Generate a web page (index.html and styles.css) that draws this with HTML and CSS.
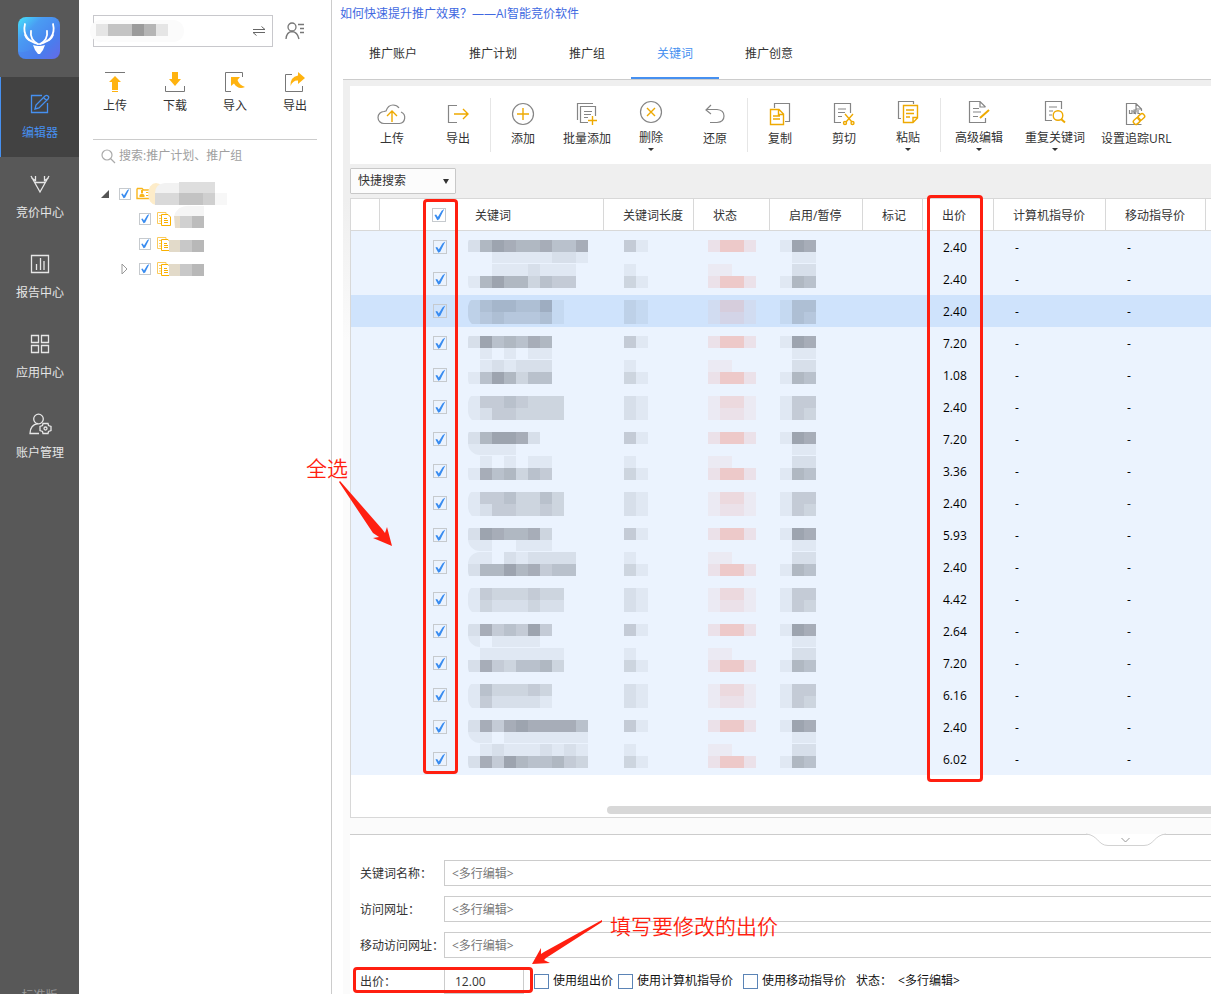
FILE: index.html
```html
<!DOCTYPE html>
<html lang="zh-CN">
<head>
<meta charset="utf-8">
<title>关键词编辑器</title>
<link rel="stylesheet" href="styles.css">
</head>
<body>
<div class="app">
  <nav class="sidebar">
    <svg class="logo" viewBox="0 0 42 42" role="img" aria-label="Logo">
      <defs>
        <linearGradient id="lg" x1="0" y1="0" x2="1" y2="1"><stop offset="0" stop-color="#45e4fb"/><stop offset=".3" stop-color="#4a9cf3"/><stop offset=".7" stop-color="#4a80ee"/><stop offset="1" stop-color="#7462e2"/></linearGradient>
      </defs>
      <rect width="42" height="42" rx="8" fill="url(#lg)"/>
      <path d="M0 35C17 37 27 20 42 8V34Q42 42 34 42H8Q0 42 0 35Z" fill="#4a78ee" opacity=".35"/>
      <g fill="none" stroke="#fff" stroke-width="1.8" stroke-linecap="round">
        <path d="M7 7C4 19 12 25 20 27M35 7C38 19 30 25 22 27"/>
        <path d="M13 14C12 20 15 25 20 27M29 14C30 20 27 25 22 27"/>
        <path d="M7 18Q9 23 13 24M35 18Q33 23 29 24"/>
      </g>
      <path d="M15 28Q21 30 27 28L25 33 22 37H20L17 33Z" fill="#fff"/>
    </svg>
    <a class="nav active" href="#"><svg viewBox="0 0 20 20"><path d="M12 1.500H1.500V18.500H17.500V9"/><path d="M5 15L6 11 15 2Q16.500 .8 18 2T18 5L9 14ZM13.500 3.500L16.500 6.500"/></svg><span>编辑器</span></a>
    <a class="nav" href="#"><svg viewBox="0 0 20 20"><path d="M1 2L10 18 19 2M4.500 8.500H15.500M1.500 4L5.500 6.500V2M18.500 4L14.500 6.500V2"/></svg><span>竞价中心</span></a>
    <a class="nav" href="#"><svg viewBox="0 0 20 20"><path d="M1.500 1.500H18.500V18.500H1.500ZM6.500 10V16M10.500 4V16M14 7V16"/></svg><span>报告中心</span></a>
    <a class="nav" href="#"><svg viewBox="0 0 20 20"><path d="M1.500 1.500H8.500V8.500H1.500ZM11.500 1.500H18.500V8.500H11.500ZM1.500 11.500H8.500V18.500H1.500ZM11.500 11.500H18.500V18.500H11.500Z"/></svg><span>应用中心</span></a>
    <a class="nav" href="#"><svg viewBox="0 0 20 20"><circle cx="8.500" cy="5" r="4.800"/><path d="M9 19.500H0Q0 11 8 9.500"/><circle cx="15.500" cy="14.500" r="1.500"/><path d="M13 9.500H18L18.500 11.500 21 12.500V16.500L18.500 17.500 18 19.500H13L12.500 17.500 10 16.500V12.500L12.500 11.500Z"/></svg><span>账户管理</span></a>
    <span class="edition">标准版</span>
  </nav>

  <aside class="panel">
    <div class="account">
      <div class="account-box">
        <svg class="blur" viewBox="0 0 100 26"><rect x="0" y="2" width="94" height="22" rx="11" fill="#fbfbfb"/><path fill="#e5e5e5" d="M6 6h12v12H6zM66 6h12v12H66z"/><path fill="#c3c3c3" d="M18 6h24v12H18z"/><path fill="#9b9b9b" d="M42 6h12v12H42z"/><path fill="#b5b5b5" d="M54 6h12v12H54z"/></svg>
        <button class="icon-btn" aria-label="切换账户"><svg width="14" height="12" viewBox="0 0 14 12"><path d="M1 4.500H13L9.500 1.500M13 7.500H1L4.500 10.500" fill="none" stroke="#666"/></svg></button>
      </div>
      <button class="icon-btn" aria-label="账户列表"><svg width="20" height="18" viewBox="0 0 20 18"><g fill="none" stroke="#777" stroke-width="1.300"><circle cx="7" cy="5" r="4"/><path d="M1 17Q1.500 10 7 9.500 12.500 10 14 17M13 2.500H19M15 6.500H19M15 10.500H19"/></g></svg></button>
    </div>
    <div class="actions">
      <button><svg viewBox="0 0 20 20"><path d="M0 .5H20" stroke="#777"/><path d="M10 4L16 10H13V18H7V10H4ZM7 19H13V20H7Z" fill="#ffb30f"/></svg>上传</button>
      <button><svg viewBox="0 0 20 20"><path d="M.5 14V19.500H19.500V14" stroke="#777" fill="none"/><path d="M7 0H13V7H16L10 14 4 7H7Z" fill="#ffb30f"/></svg>下载</button>
      <button><svg viewBox="0 0 20 20"><path d="M17.500 5V.5H.5V19.500H6" stroke="#777" fill="none"/><path d="M6 5H15L12.500 8Q14 13 20 15 13 18 9 11.500L6 14Z" fill="#ffb30f"/></svg>导入</button>
      <button><svg viewBox="0 0 20 20"><path d="M7 2.500H.5V19.500H17.500V14" stroke="#777" fill="none"/><path d="M13 0L20 6 13 12V8.500Q8 8 5.500 14 5 5 13 3.500Z" fill="#ffb30f"/></svg>导出</button>
    </div>
    <label class="search"><svg width="15" height="15" viewBox="0 0 15 15"><g fill="none" stroke="#aaa" stroke-width="1.200"><circle cx="6" cy="6" r="5"/><path d="M9.500 9.500L14 14"/></g></svg><input type="text" aria-label="搜索" placeholder="搜索:推广计划、推广组"></label>
    <ul class="tree">
      <li><span class="twist"><svg width="8" height="8"><path d="M8 0V8H0Z" fill="#555"/></svg></span><input type="checkbox" class="ck small" checked aria-label="账户">
        <svg class="node" width="94" height="25" viewBox="0 0 94 25"><path d="M1 7.500H6L7.500 9H14M1 7.500V17.500H14" fill="none" stroke="#f9b61c" stroke-width="1.400"/><path d="M3.500 16V14L5.500 12.500H6.500L8.500 14V16ZM5 9H7V12H5ZM10 11H13V12H10ZM10 14H13V15H10Z" fill="#f9b61c"/><ellipse cx="20" cy="13" rx="8" ry="11" fill="#fdecc9"/><path d="M19 12q0-9 10-10h38v10z" fill="#f2f2f2"/><path d="M19 12h24v12H19z" fill="#d9d9d9"/><path d="M43 1h36v11H43z" fill="#dedede"/><path d="M43 12h24v12H43z" fill="#c3c3c3"/><path d="M67 12h12v12H67z" fill="#cfcfcf"/><path d="M79 12h12v12H79z" fill="#f7f7f7"/></svg></li>
      <li class="child"><span class="twist"></span><input type="checkbox" class="ck small" checked aria-label="计划一"><svg class="node" width="48" height="25" viewBox="0 0 48 25"><use href="#doc"/><path d="M18 10Q22 -2 36 0H48V12H20Z" fill="#f5f5f5"/><path d="M18 10h6v12h-5z" fill="#e6dccb"/><path d="M24 10h12v12H24z" fill="#d0d0d0"/><path d="M36 10h12v12H36z" fill="#bcbcbc"/></svg></li>
      <li class="child"><span class="twist"></span><input type="checkbox" class="ck small" checked aria-label="计划二"><svg class="node" width="48" height="25" viewBox="0 0 48 25"><use href="#doc"/><path d="M13 9h11v12H13z" fill="#e2dac9"/><path d="M24 9h12v12H24z" fill="#c8c8c8"/><path d="M36 9h12v12H36z" fill="#b8b8b8"/></svg></li>
      <li class="child"><span class="twist"><svg width="7" height="12"><path d="M1 1L6 6 1 11Z" fill="#fff" stroke="#999"/></svg></span><input type="checkbox" class="ck small" checked aria-label="计划三"><svg class="node" width="48" height="25" viewBox="0 0 48 25"><use href="#doc"/><path d="M13 8h11v12H13z" fill="#e2dac9"/><path d="M24 8h12v12H24z" fill="#c8c8c8"/><path d="M36 8h12v12H36z" fill="#b8b8b8"/></svg></li>
    </ul>
    <svg class="defs" aria-hidden="true"><g id="doc"><path d="M5 17.500H1.500V6.500H10V8M3 9.500H5M3 12.500H5M3 15H5" fill="none" stroke="#fccb5c"/><path d="M5.500 8.500H12L14.500 11V19.500H5.500ZM8 12.500H11M8 14.500H12M8 16.500H12" fill="#fff" stroke="#f9b000"/></g></svg>
  </aside>

  <main class="main">
    <a class="promo" href="#">如何快速提升推广效果？——AI智能竞价软件</a>
    <div class="tabs">
      <a href="#">推广账户</a><a href="#">推广计划</a><a href="#">推广组</a><a href="#" class="on">关键词</a><a href="#">推广创意</a>
    </div>
    <div class="workspace">
      <div class="toolbar">
        <div class="group wide">
          <button><svg width="28" height="24" viewBox="0 0 28 24"><path class="g" d="M7 21.500H6A6 6 0 0 1 6 9.500Q7 9 8 9 10 3 15 3 19 3 21 6M7 21.500H21.500A6 6 0 0 0 23 10"/><path class="y" d="M14 20V9M9 14L14 9 19 14"/></svg>上传</button>
          <button><svg width="24" height="24" viewBox="0 0 24 24"><path class="g" d="M11 3.500H2.500V20.500H11"/><path class="y" d="M8 12H21.500M17 7L22 12 17 17"/></svg>导出</button>
        </div>
        <div class="group">
          <button><svg width="24" height="24" viewBox="0 0 24 24"><circle class="g" cx="12" cy="12" r="10.500"/><path class="y" d="M12 6V18M6 12H18"/></svg>添加</button>
          <button><svg width="24" height="24" viewBox="0 0 24 24"><path class="g" d="M2.500 18V1.500H18M13 20.500H5.500V4.500H20.500V14M9 9.500H17M9 12.500H16M9 15.500H13"/><path class="y" d="M17.500 14V23M13 18.500H22"/></svg>批量添加</button>
          <button class="more"><svg width="24" height="24" viewBox="0 0 24 24"><circle class="g" cx="12" cy="12" r="10.500"/><path class="y" d="M8 8L16 16M16 8L8 16"/></svg>删除</button>
          <button><svg width="24" height="24" viewBox="0 0 24 24"><path class="g" d="M8 3L3 8 8 12M3 7.500H14Q21 8 21 14T14 20.500H7"/></svg>还原</button>
        </div>
        <div class="group">
          <button><svg width="24" height="24" viewBox="0 0 24 24"><path class="g" d="M6.500 6V1.500H21.500V19.500H17"/><path class="y" d="M2.500 7.500H11L15.500 12V22.500H2.500ZM10.500 8V12.500H15M5 14H12M5 17H12"/></svg>复制</button>
          <button><svg width="24" height="24" viewBox="0 0 24 24"><path class="g" d="M9 20.500H2.500V1.500H18.500V11M6 7H14M6 10.500H13M6 14.500H10"/><path class="y" d="M13 12L20 20M21 12L14 20"/><circle class="y" cx="13" cy="21" r="1.500"/><circle class="y" cx="20.500" cy="21" r="1.500"/></svg>剪切</button>
          <button class="more"><svg width="24" height="24" viewBox="0 0 24 24"><path class="g" d="M5 18.500H2.500V1.500H17.500V4"/><path class="y" d="M7.500 5.500H21.500V18L17 22.500H7.500ZM17 22V17.500H21.500M10 10H18M10 13.500H18M10 17H14"/></svg>粘贴</button>
        </div>
        <div class="group auto">
          <button class="more"><svg width="24" height="24" viewBox="0 0 24 24"><path class="g" d="M18.500 18V22.500H2.500V1.500H13L18.500 7M13 1.500V7H18.500M6 8.500H12M6 12H14M6 16.500H11"/><path class="y thick" d="M13 18L22 10"/></svg>高级编辑</button>
          <button class="more"><svg width="24" height="24" viewBox="0 0 24 24"><path class="g" d="M9 20.500H2.500V1.500H18.500V9M6 7H14M6 11H10M6 15H9"/><circle class="y" cx="15" cy="15.500" r="4.800"/><path class="y thick" d="M18 19L22 22.500"/></svg>重复关键词</button>
          <button><svg width="24" height="24" viewBox="0 0 24 24"><path class="g" d="M17.500 22.500H2.500V1.500H12L17.500 7V9M12 1.500V7H17M5.500 8V11.500H8V8M10 12V8H12V10H10L12 12M14 8V11.500H16"/><g transform="rotate(-42 15 17)"><rect class="y" x="8.500" y="14.500" width="7" height="5" rx="2"/><rect class="y" x="14.500" y="14.500" width="7" height="5" rx="2"/></g></svg>设置追踪URL</button>
        </div>
      </div>

      <div class="filter"><select aria-label="快捷搜索"><option>快捷搜索</option></select></div>

      <div class="grid">
        <table>
          <colgroup><col class="c-a"><col class="c-b"><col class="c-ck"><col class="c-kw"><col class="c-len"><col class="c-st"><col class="c-en"><col class="c-mk"><col class="c-bid"><col class="c-pc"><col class="c-mb"><col></colgroup>
          <thead><tr><th></th><th class="open"></th><th class="open tick"><input type="checkbox" class="ck" checked aria-label="全选"></th><th class="kw">关键词</th><th>关键词长度</th><th>状态</th><th>启用/暂停</th><th>标记</th><th>出价</th><th>计算机指导价</th><th>移动指导价</th><th class="open"></th></tr></thead>
          <tbody id="rows"></tbody>
        </table>
        <div class="scroll"></div>
      </div>

      <section class="editor">
        <button class="collapse" aria-label="收起"><svg width="80" height="13" viewBox="0 0 80 13"><path d="M0 0C12 1 12 11.500 22 11.500H58C68 11.500 68 1 80 0" fill="#fff" stroke="#d2d2d2"/><path d="M35.500 4L39.500 8 43.500 4" fill="none" stroke="#999"/></svg></button>
        <div class="field"><label for="f1">关键词名称：</label><input id="f1" type="text" value="&lt;多行编辑&gt;"></div>
        <div class="field"><label for="f2">访问网址：</label><input id="f2" type="text" value="&lt;多行编辑&gt;"></div>
        <div class="field"><label for="f3">移动访问网址：</label><input id="f3" type="text" value="&lt;多行编辑&gt;"></div>
        <div class="field"><label for="f4">出价：</label><input id="f4" class="bid" type="text" value="12.00">
          <div class="options">
            <label><input type="checkbox" class="box">使用组出价</label>
            <label><input type="checkbox" class="box">使用计算机指导价</label>
            <label><input type="checkbox" class="box">使用移动指导价</label>
            <span class="state">状态：</span><span>&lt;多行编辑&gt;</span>
          </div>
        </div>
      </section>
    </div>
  </main>

  <div class="mark mark-check"></div>
  <div class="mark mark-bid"></div>
  <div class="mark mark-input"></div>
  <div class="note note-all">全选</div>
  <div class="note note-fill">填写要修改的出价</div>
  <svg class="arrow arrow-all" width="54" height="66" viewBox="0 0 54 66"><path d="M0 2L1 1 43 49 46 53 48 47 53 66 34 58 40 57 34 53Z"/></svg>
  <svg class="arrow arrow-fill" width="72" height="46" viewBox="0 0 72 46"><path d="M70 0V2L14 38 12 40 18 43 0 44 9 28 9 34 12 32Z"/></svg>
</div>
<script src="app.js"></script>
</body>
</html>
```
FILE: styles.css
```css
* { box-sizing: border-box; }
body {
  margin: 0;
  background: #fff;
  color: #333;
  font: 12px/16px "Open Sans", "Noto Sans CJK SC", sans-serif;
}
a { color: inherit; text-decoration: none; }
button, input, select { font: inherit; color: inherit; }
button { padding: 0; border: 0; background: none; }
svg { display: block; overflow: visible; flex: none; }

.app { position: relative; display: flex; height: 100vh; overflow: hidden; }

/* Left navigation */
.sidebar { display: flex; flex-direction: column; flex: none; width: 79px; background: #585858; color: #e6e6e6; }
.logo { width: 42px; height: 42px; margin: 17px auto 18px 18px; }
.nav { display: flex; flex-direction: column; align-items: center; gap: 11px; height: 80px; padding-top: 17px; border-left: 1px solid transparent; }
.nav svg { width: 20px; height: 20px; fill: none; stroke: currentColor; stroke-width: 1.3; }
.nav.active { border-color: #4690f0; background: #424242; color: #4690f0; }
.edition { margin: auto 0 -10px; text-align: center; color: #999; }

/* Account panel */
.panel { flex: none; width: 253px; padding: 15px 14px 0; border-right: 1px solid #ccc; }
.account { display: flex; align-items: center; gap: 12px; }
.account-box { position: relative; display: flex; align-items: center; justify-content: flex-end; width: 180px; height: 32px; padding-right: 6px; border: 1px solid #c8c8cc; }
.blur { position: absolute; left: -4px; top: 2px; width: 100px; height: 26px; }
.actions { display: flex; margin: 25px -8px 0; padding-bottom: 25px; }
.actions button { display: flex; flex-direction: column; align-items: center; gap: 6px; width: 60px; }
.actions svg { width: 20px; height: 20px; }
.search { display: flex; align-items: center; gap: 3px; height: 33px; padding-left: 8px; border-top: 1px solid #ccc; }
.search input { flex: 1; min-width: 0; padding: 0; border: 0; outline: 0; }
.search input::placeholder { color: #a0a0a0; opacity: 1; }
.tree { margin: 9px 0 0; padding: 0; list-style: none; }
.tree li { display: flex; align-items: center; height: 25px; padding-left: 8px; }
.tree .child { padding-left: 28px; }
.twist { width: 18px; }
.node { margin-left: 5px; }
.defs { width: 0; height: 0; overflow: hidden; }

.ck { position: relative; appearance: none; flex: none; display: block; width: 14px; height: 14px; margin: 0; border: 1px solid #c6cace; }
.ck.small { width: 12px; height: 12px; }
.ck:checked::after { content: ""; display: block; width: 100%; height: 100%; background: #398cf0; clip-path: polygon(12% 55%, 26% 50%, 40% 70%, 72% 18%, 94% 4%, 52% 90%, 36% 98%); }

/* Main column */
.main { flex: 1; min-width: 0; display: flex; flex-direction: column; }
.promo { flex: none; height: 28px; padding: 6px 0 0 8px; color: #4169e1; }
.tabs { flex: none; display: flex; height: 52px; margin-left: 11px; border-bottom: 1px solid #ccc; }
.tabs a { padding: 18px 26px 0; border-bottom: 2px solid transparent; }
.tabs .on { border-color: #4690f0; color: #4690f0; }
.workspace { flex: 1; display: flex; flex-direction: column; margin-left: 11px; padding: 6px 0 0 7px; background: linear-gradient(#efefef 120px, #fbfbfb 260px); }
.workspace > * { flex: none; }

.toolbar { display: flex; height: 78px; padding: 12px 9px; background: #fff; overflow: hidden; }
.group { display: flex; flex: none; }
.group + .group { border-left: 1px solid #e6e6e6; }
.group button { position: relative; display: flex; flex-direction: column; align-items: center; gap: 5px; width: 64px; padding-top: 4px; white-space: nowrap; }
.group.wide button { width: 66px; }
.group.wide { margin-right: -1px; }
.group.auto button { width: auto; padding: 4px 14px 0; }
.group.auto button + button { padding: 4px 8px 0; }
.group .more { gap: 6px; padding-top: 2px; }
.group.auto .more, .group.auto button.more + .more { padding-top: 2px; }
.more::after { content: ""; position: absolute; left: 50%; bottom: -2px; margin-left: -3px; border: 3px solid transparent; border-top-color: #333; }
.g, .y { fill: none; stroke: #858585; stroke-width: 1.2; }
.y { stroke: #eea900; stroke-width: 1.4; }
.thick { stroke-width: 2; }

.filter { position: relative; width: 106px; margin: 4px 0; background: #fcfcfc; }
.filter select { display: block; width: 100%; height: 26px; padding: 0 7px; border: 1px solid #c8c8c8; border-radius: 1px; background: none; appearance: none; }
.filter::after { content: ""; position: absolute; right: 7px; top: 11px; border: 3px solid transparent; border-top: 5px solid #333; border-bottom: 0; }

/* Keyword grid */
.grid { background: #fff; border: 1px solid #d8d8d8; border-right: 0; overflow: hidden; }
table { width: 100%; table-layout: fixed; border-collapse: separate; border-spacing: 0; }
th, td { height: 32px; padding: 2px 0 0 19px; text-align: left; font-weight: 400; white-space: nowrap; }
th { border-right: 1px solid #d8d8d8; border-bottom: 1px solid #d8d8d8; }
th.open { border-right: 0; }
th.kw { padding-left: 17px; }
th.tick { padding: 0 0 0 7px; }
td.tick { padding: 0 0 0 8px; }
td { background: #ebf3fe; color: #000; }
tr.sel td { background: #cfe3fc; }
td.m { padding: 0; }
td.num { padding-left: 20px; }
td.dash { padding-left: 21px; }
.c-a { width: 29px; } .c-b { width: 45px; } .c-ck { width: 33px; } .c-kw { width: 146px; }
.c-len { width: 90px; } .c-st { width: 76px; } .c-en { width: 93px; } .c-mk { width: 60px; }
.c-bid { width: 71px; } .c-pc { width: 112px; } .c-mb { width: 100px; }
.mosaic { height: 32px; margin-left: 10px; }
.mosaic.kw { clip-path: inset(1px 0 0 0 round 12px 0 0 12px); }
.mosaic.len { margin-left: 20px; }
.mosaic.st { margin-left: 14px; }
.scroll { height: 8px; margin: 31px 0 3px 256px; border-radius: 4px 0 0 4px; background: #d8d8d8; }

/* Editor form */
.workspace > .editor { flex: 1 0 auto; }
.editor { position: relative; margin-top: 16px; padding: 25px 0 0 10px; border-top: 1px solid #ccc; background: #fff; }
.collapse { position: absolute; right: 45px; top: -1px; }
.field { display: flex; align-items: center; margin-bottom: 10px; }
.field > label { flex: none; width: 84px; padding-top: 2px; white-space: nowrap; }
.field > input { flex: 1; min-width: 0; height: 26px; padding: 0 7px; border: 1px solid #ccc; border-right: 0; color: #777; background: #fff; outline: 0; }
.field > .bid { flex: none; width: 80px; padding-left: 10px; border-right: 1px solid #ccc; color: #333; }
.options { display: flex; align-items: center; margin-left: 10px; color: #111; white-space: nowrap; }
.options label { display: flex; align-items: center; gap: 4px; margin-right: 5px; }
.options label + label { margin-right: 10px; }
.box { appearance: none; width: 15px; height: 15px; margin: 0; border: 1px solid #5b84b6; background: #fff; }
.state { width: 42px; }

/* Annotations over the page */
.mark { position: absolute; border: 3px solid #ff1f10; border-radius: 4px; pointer-events: none; }
.mark-check { left: 423px; top: 199px; width: 35px; height: 575px; }
.mark-bid { left: 927px; top: 195px; width: 56px; height: 587px; }
.mark-input { left: 353px; top: 967px; width: 180px; height: 26px; }
.note { position: absolute; font-size: 21px; line-height: 28px; font-weight: 350; color: #ff1f10; white-space: nowrap; }
.note-all { left: 306px; top: 454px; }
.note-fill { left: 610px; top: 912px; }
.arrow { position: absolute; fill: #ff1f10; }
.arrow-all { left: 339px; top: 480px; }
.arrow-fill { left: 532px; top: 920px; }
```
FILE: app.js
```js
// Each entry: bid, then two strips of masking levels for the keyword text.
const data = [
  ["2.40", "2687667557", "0011111221"],
  ["2.40", "001112111", "168663544"],
  ["2.40", "24554461", "23433341"],
  ["7.20", "2856576", "0101011"],
  ["1.08", "0121222", "1586355"],
  ["2.40", "14454333", "12443333"],
  ["7.20", "268872", "111100"],
  ["3.36", "0101011", "1756354"],
  ["2.40", "14453353", "12443343"],
  ["5.93", "2876673", "1100111"],
  ["2.40", "110212222", "266867455"],
  ["4.42", "14333433", "13222322"],
  ["2.64", "2745484", "1011110"],
  ["7.20", "01111111", "27435563"],
  ["6.16", "1533343", "1422221"],
  ["2.40", "2747877775", "1101111111"],
  ["6.02", "0121112121", "2748655643"]
];

const gray = "#3a3f4a";
const red = "#f27a68";
const offsets = [9, 1, 5];
const statusLevels = [["2552", "0000"], ["1100", "2552"], ["1331", "1221"]];
const enableLevels = [["187", "011"], ["022", "165"], ["144", "143"]];
const lengthLevels = [["41", "00"], ["10", "31"], ["21", "21"]];

function mosaic(kind, strips, phase, fill) {
  const unit = kind === "st" ? 0.07 : 0.055;
  let rects = "";
  strips.forEach((strip, line) => {
    [...strip].forEach((level, i) => {
      if (level === "0") return;
      const y = offsets[phase] + line * 12;
      const height = Math.min(12, 32 - y);
      rects += `<rect x="${i * 12}" y="${y}" width="12" height="${height}" fill="${fill}" fill-opacity="${(level * unit).toFixed(2)}"/>`;
    });
  });
  const width = strips[0].length * 12;
  return `<svg class="mosaic ${kind}" width="${width}" height="32" shape-rendering="crispEdges">${rects}</svg>`;
}

document.getElementById("rows").innerHTML = data.map(([bid, a, b], i) => {
  const p = i % 3;
  return `<tr${i === 2 ? ' class="sel"' : ""}><td></td><td></td>
    <td class="tick"><input type="checkbox" class="ck" checked aria-label="选择第${i + 1}行"></td>
    <td class="m">${mosaic("kw", [a, b], p, gray)}</td>
    <td class="m">${mosaic("len", lengthLevels[p], p, gray)}</td>
    <td class="m">${mosaic("st", statusLevels[p], p, red)}</td>
    <td class="m">${mosaic("en", enableLevels[p], p, gray)}</td>
    <td></td><td class="num">${bid}</td><td class="dash">-</td><td class="dash">-</td><td></td></tr>`;
}).join("");
```
